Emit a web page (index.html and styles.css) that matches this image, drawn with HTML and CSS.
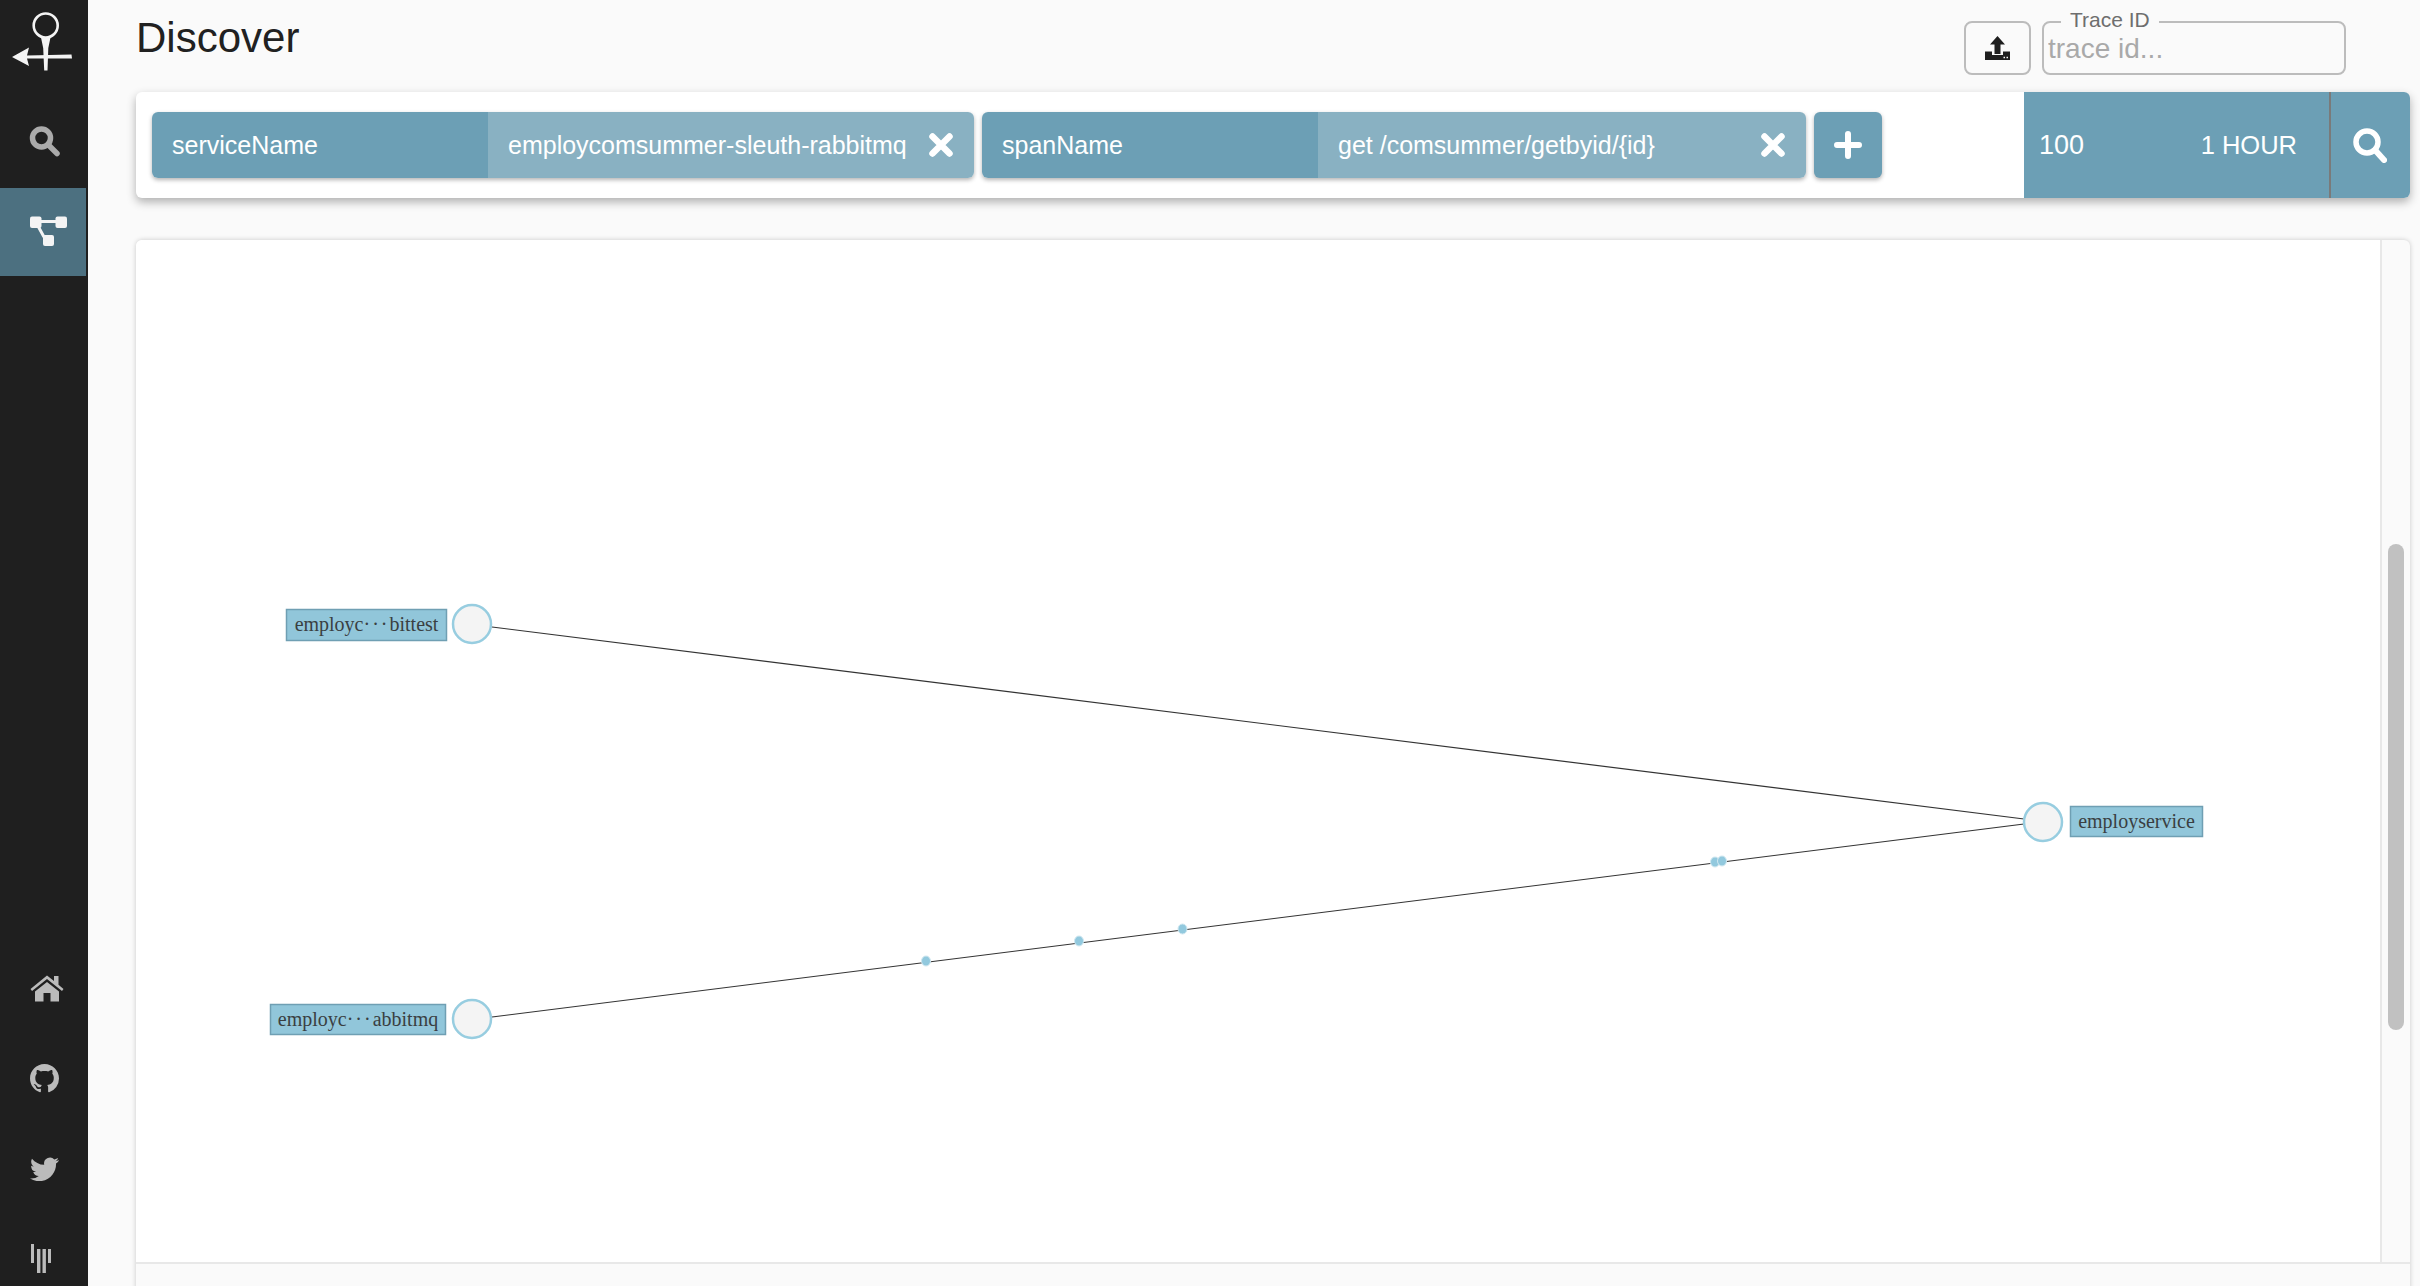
FILE: index.html
```html
<!DOCTYPE html>
<html lang="en">
<head>
<meta charset="utf-8">
<title>Discover</title>
<link rel="stylesheet" href="styles.css">
</head>
<body>
<div class="app">
  <nav class="sidebar">
    <a class="logo">
      <svg width="88" height="92" viewBox="0 0 88 92">
        <circle cx="45.7" cy="25.500" r="12" fill="none" stroke="#f4f4f4" stroke-width="2.600"/>
        <path d="M41 37.500h9.500L48.300 48 47.500 70.500h-3.300L43.200 48z" fill="#f4f4f4"/>
        <path d="M12 57 29 47.500 27 55.500 71.500 54.500 72 58.500 27 58.500 29 66z" fill="#f4f4f4"/>
      </svg>
    </a>
    <a class="nav-item">
      <svg width="88" height="88" viewBox="0 0 88 88"><circle cx="41.500" cy="46" r="9" fill="none" stroke="#aaa" stroke-width="5.500"/><path d="M48 52.500 57 61.500" stroke="#aaa" stroke-width="5.500" stroke-linecap="round"/></svg>
    </a>
    <a class="nav-item active">
      <svg width="88" height="88" viewBox="0 0 88 88">
        <g fill="#f4f4f4"><rect x="30" y="28.500" width="11.500" height="11.500" rx="2"/><rect x="55.500" y="28.500" width="11.500" height="11.500" rx="2"/><rect x="43" y="47" width="11" height="11" rx="2"/></g>
        <path d="M40 33.500H56M38 38 44 49" stroke="#f4f4f4" stroke-width="3" fill="none"/>
      </svg>
    </a>
    <div class="nav-spacer"></div>
    <a class="nav-link nav-home">
      <svg width="34" height="27" viewBox="0 0 34 27"><path d="M0.500 14 17 0.500 24 6V1h4.500v8.800L33.500 14 32 16 17 4 2 16zM5 16.500 17 7l12 9.500V26.500H20.500V18h-7v8.500H5z" fill="#bbb"/></svg>
    </a>
    <a class="nav-link nav-github">
      <svg width="29" height="29" viewBox="0 0 16 16"><path fill="#bbb" d="M8 0C3.58 0 0 3.58 0 8c0 3.54 2.29 6.53 5.47 7.59.4.07.55-.17.55-.38 0-.19-.01-.82-.01-1.49-2.01.37-2.53-.49-2.69-.94-.09-.23-.48-.94-.82-1.13-.28-.15-.68-.52-.01-.53.63-.01 1.08.58 1.23.82.72 1.21 1.87.87 2.33.66.07-.52.28-.87.51-1.07-1.78-.2-3.64-.89-3.64-3.95 0-.87.31-1.59.82-2.15-.08-.2-.36-1.02.08-2.12 0 0 .67-.21 2.2.82.64-.18 1.32-.27 2-.27.68 0 1.36.09 2 .27 1.53-1.04 2.2-.82 2.2-.82.44 1.1.16 1.92.08 2.12.51.56.82 1.27.82 2.15 0 3.07-1.87 3.75-3.65 3.95.29.25.54.73.54 1.48 0 1.07-.01 1.93-.01 2.2 0 .21.15.46.55.38A8.013 8.013 0 0016 8c0-4.42-3.58-8-8-8z"/></svg>
    </a>
    <a class="nav-link nav-twitter">
      <svg width="29" height="24" viewBox="0 1.8 24 19.8" preserveAspectRatio="none"><path fill="#bbb" d="M23.953 4.57a10 10 0 01-2.825.775 4.958 4.958 0 002.163-2.723c-.951.555-2.005.959-3.127 1.184a4.92 4.92 0 00-8.384 4.482C7.69 8.095 4.067 6.13 1.64 3.162a4.822 4.822 0 00-.666 2.475c0 1.71.87 3.213 2.188 4.096a4.904 4.904 0 01-2.228-.616v.06a4.923 4.923 0 003.946 4.827 4.996 4.996 0 01-2.212.085 4.936 4.936 0 004.604 3.417 9.867 9.867 0 01-6.102 2.105c-.39 0-.779-.023-1.17-.067a13.995 13.995 0 007.557 2.209c9.053 0 13.998-7.496 13.998-13.985 0-.21 0-.42-.015-.63A9.935 9.935 0 0024 4.59z"/></svg>
    </a>
    <a class="nav-link nav-gitter">
      <svg width="21" height="29" viewBox="0 0 21 29"><g fill="#bbb"><rect width="3" height="19"/><rect x="6" y="5" width="3.400" height="24"/><rect x="11.500" y="5" width="3.400" height="24"/><rect x="17" y="5" width="3" height="14"/></g></svg>
    </a>
  </nav>

  <main class="main">
    <header class="topbar">
      <h1 class="title">Discover</h1>
      <div class="trace-tools">
        <button class="upload" type="button" aria-label="Upload">
          <svg width="25" height="24" viewBox="0 0 25 24"><path d="M12.500 0 20 8.500h-4.500V18h-6V8.500H5z M0 15.500h7v3.500h11v-3.500h7V24H0z" fill="#1e1e1e"/><path d="M18.500 21.500h1.500M21.500 21.500h1.500" stroke="#fff" stroke-width="1.500"/></svg>
        </button>
        <div class="trace-field">
          <span class="trace-label">Trace ID</span>
          <input class="trace-input" type="text" placeholder="trace id...">
        </div>
      </div>
    </header>

    <section class="searchbar">
      <div class="chips">
        <div class="chip chip-service">
          <span class="chip-key">serviceName</span>
          <span class="chip-value">employcomsummer-sleuth-rabbitmq
            <svg class="chip-x" width="26" height="24" viewBox="0 0 26 24"><path d="M4.500 3.500 21.500 20.500M21.500 3.500 4.500 20.500" stroke="#fff" stroke-width="6.500" stroke-linecap="round"/></svg>
          </span>
        </div>
        <div class="chip chip-span">
          <span class="chip-key">spanName</span>
          <span class="chip-value">get /comsummer/getbyid/{id}
            <svg class="chip-x" width="26" height="24" viewBox="0 0 26 24"><path d="M4.500 3.500 21.500 20.500M21.500 3.500 4.500 20.500" stroke="#fff" stroke-width="6.500" stroke-linecap="round"/></svg>
          </span>
        </div>
        <button class="add" type="button" aria-label="Add">
          <svg width="28" height="28" viewBox="0 0 28 28"><path d="M14 3V25M3 14H25" stroke="#fff" stroke-width="6" stroke-linecap="round"/></svg>
        </button>
      </div>
      <div class="limits">
        <div class="limit-values"><span class="limit-count">100</span><span>1 HOUR</span></div>
        <button class="run" type="button" aria-label="Search">
          <svg width="34" height="35" viewBox="0 0 34 35"><circle cx="14" cy="14" r="11" fill="none" stroke="#fff" stroke-width="5.500"/><path d="M22 22 31 32" stroke="#fff" stroke-width="6" stroke-linecap="round"/></svg>
        </button>
      </div>
    </section>

    <section class="panel">
      <div class="panel-body">
        <div class="canvas">
          <svg class="graph" width="2244" height="1022" viewBox="136 240 2244 1022">
            <g class="edges">
              <line x1="492" y1="627" x2="2024" y2="819"/>
              <line x1="492" y1="1017" x2="2024" y2="824"/>
            </g>
            <g class="dots">
              <ellipse cx="926" cy="961" rx="4.500" ry="5"/>
              <ellipse cx="1079" cy="941" rx="4.500" ry="5"/>
              <ellipse cx="1182.500" cy="929" rx="4.500" ry="5"/>
              <ellipse cx="1715" cy="862" rx="4.500" ry="5"/>
              <ellipse cx="1722" cy="861" rx="4.500" ry="5"/>
            </g>
            <g class="nodes">
              <circle cx="472" cy="624" r="19"/>
              <circle cx="472" cy="1019" r="19"/>
              <circle cx="2043" cy="822" r="19"/>
            </g>
            <g class="labels">
              <rect x="286.500" y="609.500" width="160" height="31"/>
              <text x="366.500" y="631">employc<tspan class="ellipsis">···</tspan>bittest</text>
              <rect x="270.500" y="1004.500" width="175" height="30"/>
              <text x="358" y="1025.500">employc<tspan class="ellipsis">···</tspan>abbitmq</text>
              <rect x="2070.500" y="806.500" width="132" height="30"/>
              <text x="2136.500" y="827.500">employservice</text>
            </g>
          </svg>
        </div>
        <div class="track"><div class="thumb"></div></div>
      </div>
      <div class="panel-foot"></div>
    </section>
  </main>
</div>
</body>
</html>
```
FILE: styles.css
```css
* { box-sizing: border-box; }
html, body { margin: 0; height: 100%; overflow: hidden; }
body {
  background: #fafafa;
  font-family: "Liberation Sans", Arial, sans-serif;
  color: #212121;
}
svg { display: block; }
button { border: 0; padding: 0; font: inherit; }

.app { display: flex; height: 1286px; }

.sidebar {
  width: 88px;
  flex: none;
  background: #1f1f1f;
  display: flex;
  flex-direction: column;
}
.logo { display: block; height: 92px; }
.nav-item { display: block; height: 96px; }
.nav-item.active { height: 88px; width: 86px; background: #4c7080; }
.nav-spacer { flex: 1; }
.nav-link { display: block; margin-left: 30px; }
.nav-home { margin-bottom: 62px; }
.nav-github { margin-bottom: 64px; }
.nav-twitter { margin-bottom: 63px; }
.nav-gitter { margin-left: 31px; margin-bottom: 13px; }

.main {
  flex: 1;
  min-width: 0;
  padding: 0 10px 0 48px;
  display: flex;
  flex-direction: column;
}

.topbar {
  height: 92px;
  flex: none;
  display: flex;
  justify-content: space-between;
  padding-right: 64px;
}
.title {
  margin: 13px 0 0;
  font-size: 42px;
  line-height: 50px;
  font-weight: 400;
}
.trace-tools { display: flex; gap: 11px; padding-top: 21px; }
.upload {
  width: 67px;
  height: 54px;
  border: 2px solid #bcbcbc;
  border-radius: 8px;
  background: #fafafa;
  display: flex;
  align-items: center;
  justify-content: center;
}
.trace-field {
  position: relative;
  width: 304px;
  height: 54px;
  border: 2px solid #bcbcbc;
  border-radius: 8px;
}
.trace-label {
  position: absolute;
  left: 17px;
  top: -15px;
  padding: 0 9px;
  background: #fafafa;
  color: #6e6e6e;
  font-size: 21px;
  line-height: 24px;
}
.trace-input {
  display: block;
  width: 100%;
  height: 100%;
  padding: 2px 4px 0;
  border: 0;
  outline: 0;
  background: transparent;
  font: 28px "Liberation Sans", Arial, sans-serif;
}
.trace-input::placeholder { color: #a9a9a9; opacity: 1; }

.searchbar {
  height: 106px;
  flex: none;
  display: flex;
  justify-content: space-between;
  background: #fff;
  border-radius: 6px;
  box-shadow: 0 4px 10px rgba(0, 0, 0, .3);
}
.chips {
  display: flex;
  gap: 8px;
  padding: 20px 16px;
  color: #fff;
  font-size: 25px;
}
.chip {
  display: flex;
  height: 66px;
  border-radius: 6px;
  overflow: hidden;
  box-shadow: 0 2px 4px rgba(0, 0, 0, .3);
}
.chip-service { width: 822px; }
.chip-span { width: 824px; }
.chip-key {
  width: 336px;
  flex: none;
  padding-left: 20px;
  line-height: 66px;
  background: #6c9fb5;
}
.chip-value {
  flex: 1;
  display: flex;
  align-items: center;
  justify-content: space-between;
  padding: 0 20px;
  background: #89b1c2;
  white-space: nowrap;
}
.add {
  width: 68px;
  height: 66px;
  border-radius: 6px;
  background: #6c9fb5;
  box-shadow: 0 2px 4px rgba(0, 0, 0, .3);
  display: flex;
  align-items: center;
  justify-content: center;
}
.limits {
  width: 386px;
  display: flex;
  background: #6c9fb5;
  border-radius: 0 6px 6px 0;
  color: #fff;
  font-size: 25.500px;
}
.limit-values {
  width: 307px;
  display: flex;
  align-items: center;
  justify-content: space-between;
  padding: 0 32px 0 15px;
  border-right: 2px solid #7a7a7a;
}
.limit-count { font-size: 27px; }
.run {
  flex: 1;
  padding-right: 2px;
  background: transparent;
  display: flex;
  align-items: center;
  justify-content: center;
}

.panel {
  margin-top: 42px;
  flex: none;
  background: #fafafa;
  border-radius: 6px 6px 0 0;
  box-shadow: 0 0 5px rgba(0, 0, 0, .2);
}
.panel-body { display: flex; height: 1022px; }
.canvas { width: 2244px; flex: none; background: #fff; border-radius: 6px 0 0 0; }
.track {
  flex: 1;
  padding: 0 6px;
  border-left: 2px solid #e8e8e8;
}
.thumb {
  width: 16px;
  height: 486px;
  margin-top: 304px;
  border-radius: 8px;
  background: #c1c1c1;
}
.panel-foot { height: 40px; border-top: 2px solid #e8e8e8; }

.edges line { stroke: #333; stroke-width: 1.200; }
.dots ellipse { fill: #92c9de; stroke: #cfe7f0; stroke-width: 1; }
.nodes circle { fill: #f4f4f4; stroke: #97cde0; stroke-width: 2.500; }
.labels rect { fill: #91c6da; stroke: #6f9fb3; stroke-width: 1.500; }
.labels text {
  font-family: "Liberation Serif", "Times New Roman", serif;
  font-size: 20px;
  fill: #3a3f42;
  text-anchor: middle;
}
.labels .ellipsis { letter-spacing: 2px; }
```
